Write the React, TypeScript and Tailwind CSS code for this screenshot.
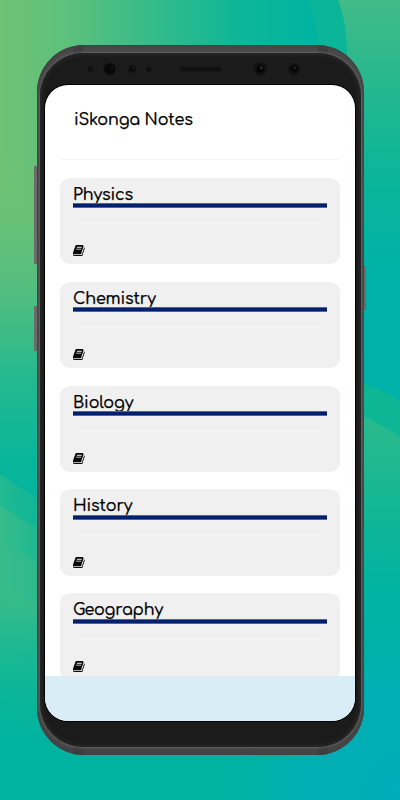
const SUBJECTS = ['Physics', 'Chemistry', 'Biology', 'History', 'Geography']

function BookIcon() {
  return (
    <svg viewBox="60 128 1640 1540" preserveAspectRatio="none" className="block h-[11px] w-[12px]" fill="#080808">
      <path d="M1639 478q40 57 18 129l-275 906q-19 64-76.500 107.500t-122.500 43.500h-923q-77 0-148.500-53.500t-99.500-131.500q-24-67-2-127 0-4 3-27t4-37q1-8-3-21.500t-3-19.500q2-11 8-21t16.500-23.500 16.500-23.500q23-38 45-91.500t30-91.500q3-10 .5-30t-.5-28q3-11 17-28t17-23q21-36 42-92t25-90q1-9-2.500-32t.5-28q4-13 22-30.500t22-22.500q19-26 42.500-84.500t27.500-96.500q1-8-3-25.500t-2-26.500q2-8 9-18t18-23 17-21q8-12 16.500-30.500t15-35 16-36 19.500-32 26.500-23.500 36-11.500 47.500 5.500l-1 3q38-9 51-9h761q74 0 114 56t18 130l-274 906q-36 119-71.500 153.500t-128.500 34.500h-869q-27 0-38 15-11 16-1 43 24 70 144 70h923q29 0 56-15.500t35-41.500l300-987q7-22 5-57 38 15 59 43zm-1064 2q-4 13 2 22.500t20 9.500h608q13 0 25.500-9.500t16.500-22.500l21-64q4-13-2-22.500t-20-9.500h-608q-13 0-25.500 9.500t-16.500 22.500zm-83 256q-4 13 2 22.500t20 9.500h608q13 0 25.500-9.500t16.500-22.500l21-64q4-13-2-22.500t-20-9.500h-608q-13 0-25.500 9.500t-16.500 22.500z" />
    </svg>
  )
}

// Green and teal waves behind the phone
function Backdrop() {
  return (
    <svg className="absolute inset-0 h-full w-full" viewBox="0 0 400 800" aria-hidden="true">
      <defs>
        <linearGradient id="top" x1="0" x2="320" y1="0" y2="0" gradientUnits="userSpaceOnUse">
          <stop offset="0" stopColor="#70c274" />
          <stop offset="0.22" stopColor="#5cc07c" />
          <stop offset="0.5" stopColor="#32bb8b" />
          <stop offset="0.76" stopColor="#0cb698" />
          <stop offset="1" stopColor="#00b3a2" />
        </linearGradient>
        <linearGradient id="left" x1="0" x2="0" y1="150" y2="530" gradientUnits="userSpaceOnUse">
          <stop offset="0" stopColor="#6cc274" stopOpacity="0" />
          <stop offset="0.18" stopColor="#68c176" />
          <stop offset="0.38" stopColor="#51be80" />
          <stop offset="0.6" stopColor="#24b98f" />
          <stop offset="0.8" stopColor="#0ab699" />
          <stop offset="1" stopColor="#00b3a0" />
        </linearGradient>
        <linearGradient id="right" x1="0" x2="0" y1="0" y2="290" gradientUnits="userSpaceOnUse">
          <stop offset="0" stopColor="#42bb88" />
          <stop offset="0.35" stopColor="#20b790" />
          <stop offset="0.65" stopColor="#08b59b" />
          <stop offset="1" stopColor="#00b1a9" />
        </linearGradient>
        <linearGradient id="wave" x1="0" x2="0" y1="400" y2="780" gradientUnits="userSpaceOnUse">
          <stop offset="0" stopColor="#30ba8c" />
          <stop offset="0.13" stopColor="#22b98f" />
          <stop offset="0.32" stopColor="#0fb697" />
          <stop offset="0.52" stopColor="#00b3a3" />
          <stop offset="1" stopColor="#00afb0" />
        </linearGradient>
        <linearGradient id="lowLeft" x1="10" x2="2" y1="560" y2="740" gradientUnits="userSpaceOnUse">
          <stop offset="0" stopColor="#38bb8a" />
          <stop offset="0.25" stopColor="#34ba8b" />
          <stop offset="0.5" stopColor="#1bb892" />
          <stop offset="0.78" stopColor="#09b599" />
          <stop offset="1" stopColor="#00b3a1" />
        </linearGradient>
        <linearGradient id="fold" x1="0" x2="40" y1="0" y2="0" gradientUnits="userSpaceOnUse">
          <stop offset="0" stopColor="#36bb8a" />
          <stop offset="1" stopColor="#1fb891" />
        </linearGradient>
        <linearGradient id="foldSoft" x1="0" x2="40" y1="0" y2="0" gradientUnits="userSpaceOnUse">
          <stop offset="0" stopColor="#22b990" />
          <stop offset="1" stopColor="#0fb697" />
        </linearGradient>
        <radialGradient id="corner" cx="400" cy="790" r="180" gradientUnits="userSpaceOnUse">
          <stop offset="0" stopColor="#00adb8" />
          <stop offset="0.6" stopColor="#00afb2" />
          <stop offset="1" stopColor="#00b2a5" stopOpacity="0" />
        </radialGradient>
      </defs>
      <rect width="400" height="800" fill="#00b3a1" />
      <rect width="400" height="270" fill="url(#top)" />
      <path d="M0 150H200V530H0Z" fill="url(#left)" />
      <path d="M308 0Q317 22 318 48V300H400V0Z" fill="#0ab697" />
      <path d="M338 0Q348 25 347 60V290H400V0Z" fill="url(#right)" />
      <path d="M350 290H400V450H350Z" fill="#00b1a9" />
      <path d="M350 379Q378 387 400 400V480H350Z" fill="#0db695" />
      <path d="M350 411Q380 423 400 437V800H350Z" fill="url(#wave)" />
      <path d="M0 474Q18 487 40 500V800H0Z" fill="url(#foldSoft)" />
      <path d="M0 505Q18 518 40 529V800H0Z" fill="url(#fold)" />
      <path d="M0 540Q20 554 40 565V800H0Z" fill="#3abb89" />
      <path d="M0 540Q20 554 40 565V800H0Z" fill="url(#fold)" opacity="0.500" />
      <path d="M0 584Q20 598 40 607V800H0Z" fill="url(#lowLeft)" />
      <path d="M0 738H400V800H0Z" fill="#00b3a1" />
      <path d="M200 600H400V800H200Z" fill="url(#corner)" />
    </svg>
  )
}

function Sensors() {
  return (
    <svg className="block h-8 w-full" viewBox="45 53 310 32" aria-hidden="true">
      <g fill="#101010" stroke="#151515">
        <circle cx="90" cy="69" r="2.500" />
        <circle cx="109.500" cy="69" r="6" fill="#080808" />
        <circle cx="132" cy="69" r="3.700" />
        <circle cx="148.500" cy="69" r="2.500" />
        <rect x="180" y="67" width="41" height="4" rx="2" />
        <circle cx="260" cy="69" r="6.500" />
        <circle cx="294" cy="69" r="5.700" />
      </g>
      <g fill="#050505">
        <circle cx="260" cy="69" r="3.500" />
        <circle cx="294" cy="69" r="3" />
        <circle cx="132" cy="69" r="2" />
        <circle cx="148.500" cy="69" r="1.500" />
        <circle cx="90" cy="69" r="1.500" />
      </g>
      <g fill="#292929">
        <circle cx="261" cy="68" r="1.400" />
        <circle cx="294.500" cy="68" r="1.200" />
        <circle cx="132.500" cy="68.500" r="1" />
        <circle cx="148.800" cy="68.500" r="0.800" />
        <circle cx="90.200" cy="68.500" r="0.800" />
        <circle cx="112" cy="67" r="1" fill="#1d1d1d" />
      </g>
    </svg>
  )
}

function SubjectCard({ name }: { name: string }) {
  return (
    <section className="flex h-[86.300px] shrink-0 flex-col rounded-[10px] bg-[#f0f0f0] px-[13px] pt-[5px]">
      <h2 className="h-[20.500px] text-[16px] leading-[25px] font-medium tracking-[-0.15px] text-black [-webkit-text-stroke:0.250px_#000]">
        {name}
      </h2>
      <div className="h-[5px] border-y border-[#526596] bg-[#03206a]" />
      <div className="mt-[15px] h-px bg-[#f3f3f3]" />
      <div className="mt-[21px]">
        <BookIcon />
      </div>
    </section>
  )
}

export default function App() {
  return (
    <div className="relative h-[800px] w-[400px] overflow-hidden px-[37px] pt-[45px] font-['Comfortaa','Quicksand','Lato',sans-serif]">
      <Backdrop />

      {/* Phone body */}
      <div className="relative h-[710px] w-[326.500px]">
        <div className="absolute top-[121px] -left-[3px] h-[98px] w-[5px] bg-[#6b6b6b]" />
        <div className="absolute top-[261px] -left-[3px] h-[45px] w-[5px] bg-[#6b6b6b]" />
        <div className="absolute top-[221px] -right-[2.500px] h-[44px] w-[5px] bg-[#6b6b6b]" />

        <div className="relative h-full overflow-hidden rounded-[47px] bg-linear-to-b from-[#484848] via-[#505050] to-[#454545] px-[3px] py-[8px] shadow-[inset_0_0_2px_1px_#424242]">
          {/* Antenna bands */}
          <div className="absolute top-0 left-[36px] h-full w-[10px] bg-[#3b3b3b]/60" />
          <div className="absolute top-0 right-[36px] h-full w-[10px] bg-[#3b3b3b]/60" />
          <div className="relative flex h-full flex-col rounded-[43px] bg-[#1b1b1b] px-[5px] shadow-[inset_0_0_5px_1px_#2d2d2d,0_0_2px_1px_#626262]">
            <Sensors />

            {/* Screen */}
            <main className="flex h-[636px] w-[310px] flex-col overflow-hidden rounded-[23px] bg-white shadow-[0_0_0_1px_#000]">
              <div className="flex min-h-0 flex-1 flex-col overflow-hidden px-[15px]">
                <header className="h-[75px] shrink-0 border-b border-[#f4f4f4] pt-[22px] pl-[14px]">
                  <h1 className="text-[16px] leading-[26px] font-medium tracking-[-0.15px] text-black [-webkit-text-stroke:0.250px_#000]">
                    iSkonga Notes
                  </h1>
                </header>
                <div className="flex flex-col gap-[17.600px] pt-[17.800px]">
                  {SUBJECTS.map((name) => (
                    <SubjectCard key={name} name={name} />
                  ))}
                </div>
              </div>
              <footer className="h-[45px] shrink-0 bg-[#d9edf6]" />
            </main>
          </div>
        </div>
      </div>
    </div>
  )
}
